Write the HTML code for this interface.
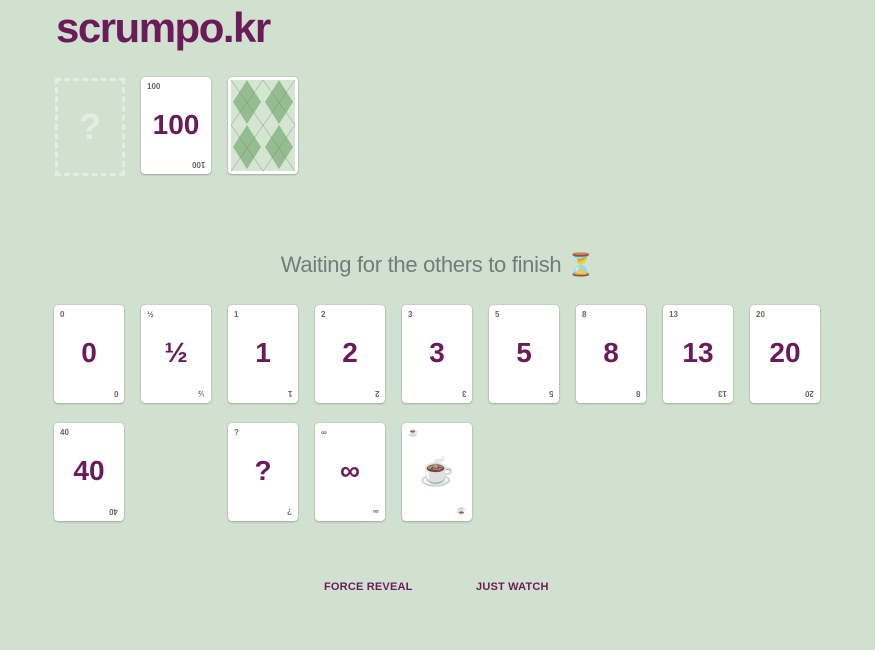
<!DOCTYPE html>
<html><head><meta charset="utf-8"><style>
body{margin:0;width:875px;height:650px;background:#d1e1cf;font-family:"Liberation Sans",sans-serif;position:relative;overflow:hidden}
.logo{position:absolute;left:56px;top:4px;font-size:42px;font-weight:bold;color:#6b1a5a;letter-spacing:-1.5px}
.card{position:absolute;width:70px;height:98px;background:#fff;border-radius:4px;box-shadow:0 1px 2px rgba(0,0,0,.2),0 0 1px rgba(107,26,90,.4)}
.card .big{position:absolute;left:0;right:0;top:32px;text-align:center;font-size:28px;font-weight:bold;color:#6b1a5a}
.card .tl{position:absolute;left:6px;top:5px;font-size:8px;color:#666;font-weight:bold}
.card .br{position:absolute;right:6px;bottom:5px;font-size:8px;color:#666;transform:rotate(180deg);font-weight:bold}
.ph{position:absolute;left:55px;top:78px;width:64px;height:92px;border:3px dashed #e4ede3;color:#e4ede3;font-size:36px;font-weight:bold;text-align:center;line-height:92px}
.wait{position:absolute;left:0;right:0;top:252px;text-align:center;font-size:22px;color:#6f7d7b;font-weight:300;letter-spacing:-.3px}
.btn{position:absolute;top:581px;font-size:11px;font-weight:bold;color:#6b1a5a;letter-spacing:.2px}
</style></head><body>
<div class="logo">scrumpo.kr</div>
<div class="ph">?</div>
<div class="card" style="left:141px;top:77px;height:97px"><div class="tl">100</div><div class="big">100</div><div class="br">100</div></div>
<div class="card" style="left:228px;top:77px;height:97px;padding:0">
<svg width="70" height="97" style="position:absolute;left:0;top:0"><rect x="3" y="3" width="64" height="91" fill="#d4e5d2"/>
<g fill="#93bd8f"><polygon points="19,3 33,25 19,47 5,25"/><polygon points="51,3 65,25 51,47 37,25"/><polygon points="19,48 33,70 19,92 5,70"/><polygon points="51,48 65,70 51,92 37,70"/></g>
<g stroke="#8a7a8a" stroke-width=".4" fill="none"><path d="M3,3L67,94M35,3L67,48M3,48L35,94M67,3L3,94M35,3L3,48M67,48L35,94"/></g></svg></div>
<div class="wait">Waiting for the others to finish ⏳</div>
<div class="card" style="left:54px;top:305px"><div class="tl">0</div><div class="big">0</div><div class="br">0</div></div>
<div class="card" style="left:141px;top:305px"><div class="tl">½</div><div class="big">½</div><div class="br">½</div></div>
<div class="card" style="left:228px;top:305px"><div class="tl">1</div><div class="big">1</div><div class="br">1</div></div>
<div class="card" style="left:315px;top:305px"><div class="tl">2</div><div class="big">2</div><div class="br">2</div></div>
<div class="card" style="left:402px;top:305px"><div class="tl">3</div><div class="big">3</div><div class="br">3</div></div>
<div class="card" style="left:489px;top:305px"><div class="tl">5</div><div class="big">5</div><div class="br">5</div></div>
<div class="card" style="left:576px;top:305px"><div class="tl">8</div><div class="big">8</div><div class="br">8</div></div>
<div class="card" style="left:663px;top:305px"><div class="tl">13</div><div class="big">13</div><div class="br">13</div></div>
<div class="card" style="left:750px;top:305px"><div class="tl">20</div><div class="big">20</div><div class="br">20</div></div>
<div class="card" style="left:54px;top:423px"><div class="tl">40</div><div class="big">40</div><div class="br">40</div></div>
<div class="card" style="left:228px;top:423px"><div class="tl">?</div><div class="big">?</div><div class="br">?</div></div>
<div class="card" style="left:315px;top:423px"><div class="tl">∞</div><div class="big">∞</div><div class="br">∞</div></div>
<div class="card" style="left:402px;top:423px"><div class="tl">☕</div><div class="big">☕</div><div class="br">☕</div></div>
<div class="btn" style="left:324px">FORCE REVEAL</div>
<div class="btn" style="left:476px">JUST WATCH</div>
</body></html>
